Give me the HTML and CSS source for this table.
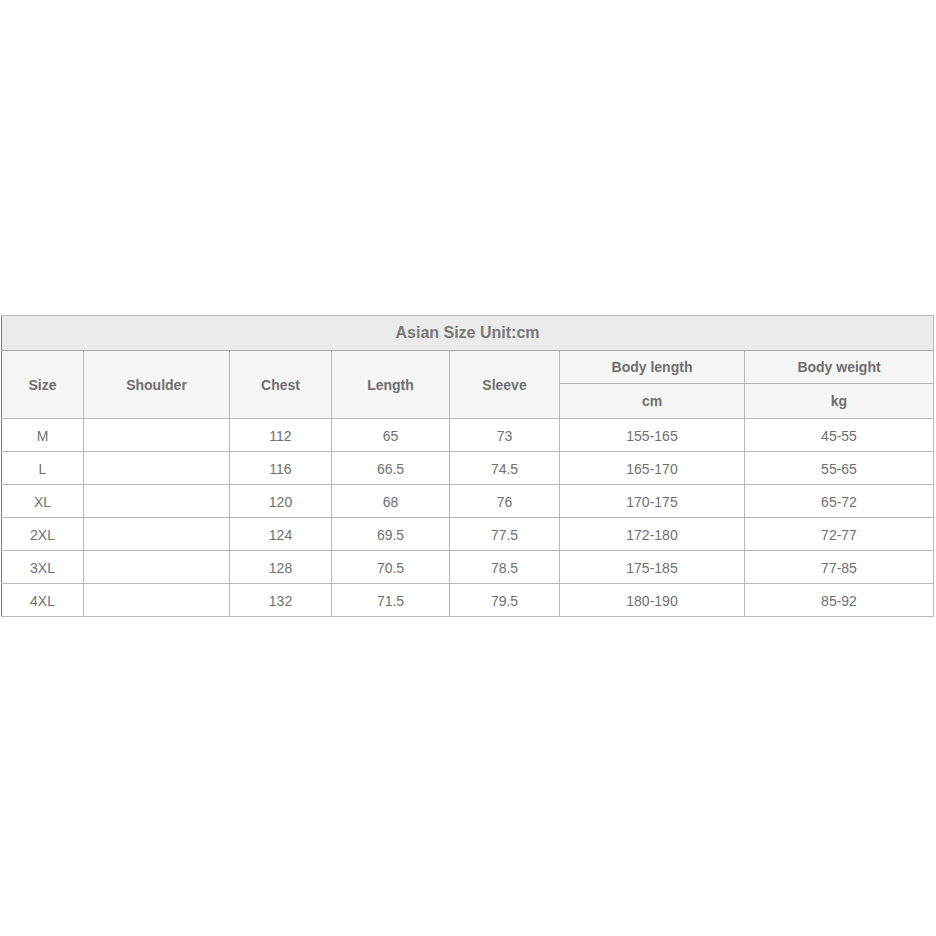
FILE: index.html
```html
<!DOCTYPE html>
<html>
<head>
<meta charset="utf-8">
<link rel="stylesheet" href="styles.css">
</head>
<body>
<div class="page">
<table class="size-table">
  <colgroup>
    <col class="c1"><col class="c2"><col class="c3"><col class="c4"><col class="c5"><col class="c6"><col class="c7">
  </colgroup>
  <tr class="title-row"><td colspan="7">Asian Size Unit:cm</td></tr>
  <tr class="head-row">
    <th rowspan="2">Size</th>
    <th rowspan="2">Shoulder</th>
    <th rowspan="2">Chest</th>
    <th rowspan="2">Length</th>
    <th rowspan="2">Sleeve</th>
    <th>Body length</th>
    <th class="dark-left">Body weight</th>
  </tr>
  <tr class="head-row2">
    <th>cm</th>
    <th>kg</th>
  </tr>
  <tr><td>M</td><td></td><td>112</td><td>65</td><td>73</td><td>155-165</td><td>45-55</td></tr>
  <tr><td>L</td><td></td><td>116</td><td>66.5</td><td>74.5</td><td>165-170</td><td>55-65</td></tr>
  <tr><td>XL</td><td></td><td>120</td><td>68</td><td>76</td><td>170-175</td><td>65-72</td></tr>
  <tr><td>2XL</td><td></td><td>124</td><td>69.5</td><td>77.5</td><td>172-180</td><td>72-77</td></tr>
  <tr><td>3XL</td><td></td><td>128</td><td>70.5</td><td>78.5</td><td>175-185</td><td>77-85</td></tr>
  <tr><td>4XL</td><td></td><td>132</td><td>71.5</td><td>79.5</td><td>180-190</td><td>85-92</td></tr>
</table>
</div>
</body>
</html>
```
FILE: styles.css
```css
html, body {
  margin: 0;
  padding: 0;
  background: #fff;
}
.page {
  padding: 315px 0 0 1px;
}
.size-table {
  border-collapse: collapse;
  table-layout: fixed;
  width: 933px;
  font-family: "Liberation Sans", Arial, sans-serif;
  color: #707070;
  border: 1px solid #7a7a7a;
}
.c1 { width: 82px; }
.c2 { width: 146px; }
.c3 { width: 102px; }
.c4 { width: 118px; }
.c5 { width: 110px; }
.c6 { width: 185px; }
.c7 { width: 189px; }
.size-table td, .size-table th {
  border: 1px solid #b8b8b8;
  text-align: center;
  padding: 1px 0 0 0;
  font-size: 14px;
}
.size-table tr {
  height: 33px;
}
.title-row td {
  background: #ebebeb;
  height: 34px;
  font-size: 16px;
  font-weight: bold;
  color: #7a7a7a;
  border-bottom-color: #a8a8a8;
  padding: 0;
}
.head-row th, .head-row2 th {
  background: #f6f6f6;
  font-weight: bold;
  color: #6e6e6e;
  padding: 0;
}
.head-row th {
  height: 32px;
}
.head-row2 th {
  height: 34px;
}
.head-row .dark-left {
  border-left-color: #777;
}
.size-table td:first-child, .size-table th:first-child {
  border-left-color: #7a7a7a;
}
```
